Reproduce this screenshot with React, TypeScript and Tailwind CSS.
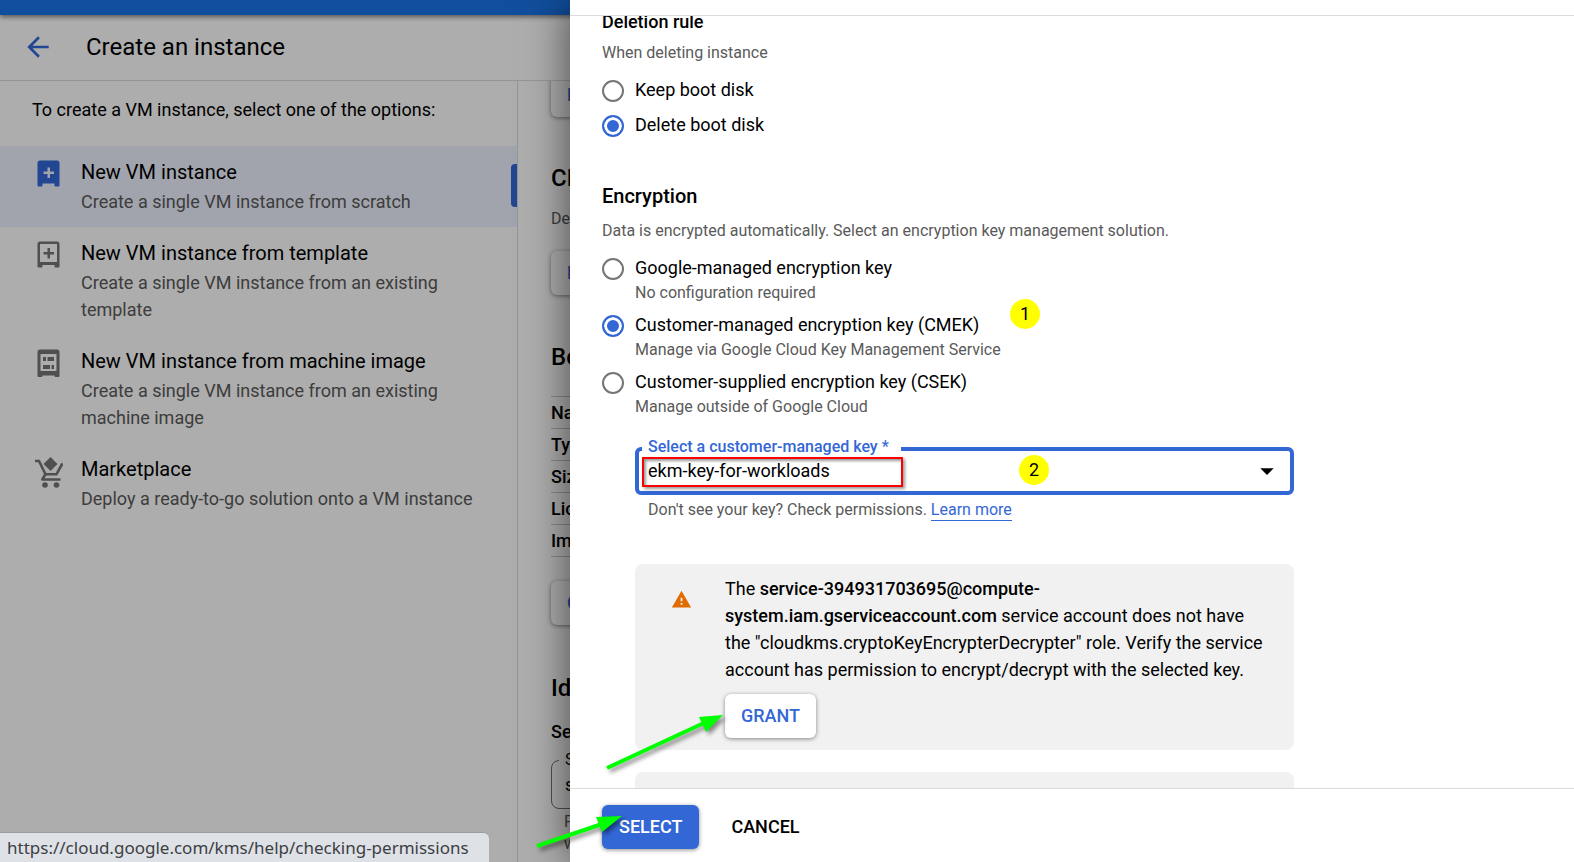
import React, { useState } from "react";
import { MdArrowBack, MdArrowDropDown, MdWarning } from "react-icons/md";

const VmIcon = () => (
  <svg width="24" height="27" viewBox="0 0 24 27" fill="#3367d6">
    <path d="M3 0.5h17a2.5 2.5 0 0 1 2.5 2.5v22.500a1 1 0 0 1-1 1h-3a1 1 0 0 1-1-1V23.500h-12V25.500a1 1 0 0 1-1 1h-3a1 1 0 0 1-1-1V3A2.500 2.500 0 0 1 3 .5z" />
    <path d="M10.500 7.500h2.500v4h4v2.500h-4v4h-2.500v-4h-4v-2.500h4z" fill="#eef2ff" />
  </svg>
);

const TemplateIcon = () => (
  <svg width="24" height="27" viewBox="0 0 24 27" fill="#757575">
    <path
      fillRule="evenodd"
      d="M3 .5h17A2.500 2.500 0 0 1 22.500 3v22.500a1 1 0 0 1-1 1h-3a1 1 0 0 1-1-1V24h-12v1.500a1 1 0 0 1-1 1h-3a1 1 0 0 1-1-1V3A2.500 2.500 0 0 1 3 .5zM3 3v18h17V3z"
    />
    <path d="M10.500 7h2.500v4h4v2.500h-4v4h-2.500v-4h-4V11h4z" />
  </svg>
);

const MachineImageIcon = () => (
  <svg width="24" height="28" viewBox="0 0 24 28" fill="#757575">
    <path
      fillRule="evenodd"
      d="M3 .5h17A2.500 2.500 0 0 1 22.500 3v24a1 1 0 0 1-1 1h-3a1 1 0 0 1-1-1v-.5h-12v.5a1 1 0 0 1-1 1h-3a1 1 0 0 1-1-1V3A2.500 2.500 0 0 1 3 .5zM3.500 5v17h16V5z"
    />
    <path d="M6 8h3v4H6zM10.500 8H17v4h-6.500zM6 16h7v4H6zM14.500 16H17v4h-2.500z" />
  </svg>
);

const MarketplaceIcon = () => (
  <svg width="28" height="31" viewBox="0 0 28 31" fill="none" stroke="#757575" strokeWidth="2.600">
    <path d="M0 4h4l6.500 13.200h11l6-10.700" />
    <path d="M10.500 17l-3.200 5.500H25.500" strokeLinejoin="round" />
    <path d="M15.500 0l7 7-7 7-7-7z" fill="#757575" stroke="none" />
    <circle cx="10" cy="28" r="2.800" fill="#757575" stroke="none" />
    <circle cx="21.500" cy="28" r="2.800" fill="#757575" stroke="none" />
  </svg>
);

const options = [
  { icon: <VmIcon />, title: "New VM instance", text: "Create a single VM instance from scratch", active: true },
  { icon: <TemplateIcon />, title: "New VM instance from template", text: "Create a single VM instance from an existing template" },
  { icon: <MachineImageIcon />, title: "New VM instance from machine image", text: "Create a single VM instance from an existing machine image" },
  { icon: <MarketplaceIcon />, title: "Marketplace", text: "Deploy a ready-to-go solution onto a VM instance" },
];

const diskRows = ["Name", "Type", "Size", "License", "Image"];

const encryptionOptions = [
  { id: "google", label: "Google-managed encryption key", hint: "No configuration required" },
  { id: "cmek", label: "Customer-managed encryption key (CMEK)", hint: "Manage via Google Cloud Key Management Service" },
  { id: "csek", label: "Customer-supplied encryption key (CSEK)", hint: "Manage outside of Google Cloud" },
];

const radioClass =
  "appearance-none shrink-0 w-[22px] h-[22px] rounded-full border-2 border-[#757575] bg-white checked:border-[#3367d6] checked:bg-[#3367d6] checked:shadow-[inset_0_0_0_3px_white]";

const raisedButton =
  "h-11 px-4 rounded-md bg-white text-[#3367d6] text-lg font-medium shadow-[0_1px_4px_rgba(0,0,0,0.45)]";

function Badge({ children, className }: { children: React.ReactNode; className: string }) {
  return (
    <span className={`absolute flex items-center justify-center w-[30px] h-[30px] rounded-full bg-[#ffff00] text-lg ${className}`}>
      {children}
    </span>
  );
}

function Sidebar() {
  return (
    <nav className="w-[518px] shrink-0 border-r border-[#dadce0]">
      <p className="px-8 pt-[15px] pb-[23px] text-lg leading-[27px]">To create a VM instance, select one of the options:</p>
      {options.map((o) => (
        <a key={o.title} href="#" className={`relative flex py-3 pr-8 ${o.active ? "bg-[#eef2ff]" : ""}`}>
          <span className="w-[81px] shrink-0 flex items-start pl-[35px] pt-0.5">
            <span className="w-7 flex justify-center">{o.icon}</span>
          </span>
          <span>
            <span className="block mb-0.5 text-xl leading-7">{o.title}</span>
            <span className="block text-lg leading-[27px] text-[#5a5a5a]">{o.text}</span>
          </span>
          {o.active && <span className="absolute right-0 top-[18px] w-1.5 h-[43px] rounded-l bg-[#3367d6]" />}
        </a>
      ))}
    </nav>
  );
}

function InstanceForm() {
  return (
    <main className="flex-1 min-w-0 pl-[33px] overflow-hidden">
      <button className={`${raisedButton} -mt-2 block`}>ENABLE</button>
      <h2 className="mt-[45px] text-2xl leading-8 font-medium">CPU</h2>
      <p className="mt-[13px] text-base leading-6 text-[#5a5a5a]">Deploy</p>
      <button className={`${raisedButton} mt-5 block`}>DEPLOY</button>
      <h2 className="mt-[46px] mb-[23px] text-2xl leading-8 font-medium">Boot</h2>
      <table className="w-full text-left text-lg">
        <tbody>
          {diskRows.map((row) => (
            <tr key={row} className="h-8 border-y border-[#c8c8c8]">
              <th className="p-0 leading-[27px] font-medium">{row}</th>
            </tr>
          ))}
        </tbody>
      </table>
      <button className={`${raisedButton} mt-6 block`}>CHANGE</button>
      <h2 className="mt-[47px] text-2xl leading-8 font-medium">Identity</h2>
      <h3 className="mt-[14px] text-lg leading-[27px] font-medium">Service</h3>
      <div className="relative mt-[15px]">
        <label htmlFor="account" className="absolute left-2 -top-3 px-1.5 bg-white text-base leading-6">
          Service
        </label>
        <select id="account" className="appearance-none w-full h-[49px] px-[13px] rounded-lg border border-[#757575] text-lg">
          <option>service</option>
        </select>
      </div>
      <p className="px-[13px] mt-[2px] text-base leading-[22px] text-[#5a5a5a]">
        Pick
        <br />
        with
      </p>
    </main>
  );
}

function Drawer() {
  const [deletion, setDeletion] = useState("delete");
  const [encryption, setEncryption] = useState("cmek");

  return (
    <aside className="relative w-[1004px] max-w-full h-full flex flex-col bg-white shadow-[0_0_40px_rgba(0,0,0,0.6)]">
      <div className="h-4 shrink-0 border-b border-[#dadce0]" />

      <div className="flex-1 min-h-0 overflow-hidden px-8">
        <h3 className="-mt-2 text-lg leading-[27px] font-medium">Deletion rule</h3>
        <p className="mt-1.5 text-base leading-6 text-[#5a5a5a]">When deleting instance</p>
        <div className="mt-[11px] flex flex-col gap-2">
          {[
            ["keep", "Keep boot disk"],
            ["delete", "Delete boot disk"],
          ].map(([id, label]) => (
            <label key={id} className="flex items-start gap-[11px] text-lg leading-[27px]">
              <input
                type="radio"
                name="deletion"
                className={`${radioClass} mt-1`}
                checked={deletion === id}
                onChange={() => setDeletion(id)}
              />
              {label}
            </label>
          ))}
        </div>

        <h3 className="mt-11 text-xl leading-7 font-medium">Encryption</h3>
        <p className="mt-[9px] text-base leading-6 text-[#5a5a5a]">
          Data is encrypted automatically. Select an encryption key management solution.
        </p>
        <div className="relative mt-[11px] flex flex-col gap-1.5">
          {encryptionOptions.map((o) => (
            <label key={o.id} className="flex items-start gap-[11px]">
              <input
                type="radio"
                name="encryption"
                className={`${radioClass} mt-1`}
                checked={encryption === o.id}
                onChange={() => setEncryption(o.id)}
              />
              <span>
                <span className="block text-lg leading-[27px]">{o.label}</span>
                <span className="block text-base leading-6 text-[#5a5a5a]">{o.hint}</span>
              </span>
            </label>
          ))}
          <Badge className="left-[408px] top-[45px]">1</Badge>
        </div>

        <div className="ml-[33px] max-w-[659px]">
          <div className="relative mt-7">
            <label
              htmlFor="key"
              className="absolute left-[7px] -top-3 pl-1.5 pr-3 bg-white text-base leading-6 font-medium text-[#3367d6]"
            >
              Select a customer-managed key *
            </label>
            <select
              id="key"
              className="appearance-none w-full h-12 px-[9px] rounded-md border-4 border-[#3367d6] bg-white text-lg outline-none"
            >
              <option>ekm-key-for-workloads</option>
            </select>
            <MdArrowDropDown className="absolute right-[11px] top-2 pointer-events-none" size={32} />
            <span className="absolute left-[7px] top-[10px] w-[261px] h-[30px] border-2 border-[#ff0000] shadow-[2px_2px_3px_rgba(0,0,0,0.4),inset_2px_2px_3px_rgba(0,0,0,0.4)] pointer-events-none" />
            <Badge className="left-[384px] top-2">2</Badge>
          </div>
          <p className="mt-[3px] pl-[13px] text-base leading-6 text-[#5a5a5a]">
            Don't see your key? Check permissions.{" "}
            <a
              href="https://cloud.google.com/kms/help/checking-permissions"
              className="pb-px border-b border-[#3367d6] text-[#3367d6]"
            >
              Learn more
            </a>
          </p>

          <div className="mt-[42px] flex rounded-lg bg-[#f1f1f1] pt-[11px] pr-7 pb-3">
            <div className="w-[90px] shrink-0 flex justify-center pl-0.5 pt-[14px]">
              <MdWarning size={21} color="#e06c00" />
            </div>
            <div>
              <p className="text-lg leading-[27px]">
                The <b className="font-medium">service-394931703695@compute-system.iam.gserviceaccount.com</b> service
                account does not have the "cloudkms.cryptoKeyEncrypterDecrypter" role. Verify the service account has
                permission to encrypt/decrypt with the selected key.
              </p>
              <button className={`${raisedButton} mt-[11px]`}>GRANT</button>
            </div>
          </div>
          <div className="mt-[22px] h-[180px] rounded-lg bg-[#f1f1f1]" />
        </div>
      </div>

      <div className="h-[74px] shrink-0 flex items-start gap-4 px-8 pt-4 border-t border-[#dadce0]">
        <button className="h-11 px-[17px] rounded-md bg-[#3367d6] text-white text-lg font-medium shadow-[0_1px_4px_rgba(0,0,0,0.45)]">
          SELECT
        </button>
        <button className="h-11 px-4 text-lg font-medium">CANCEL</button>
      </div>
    </aside>
  );
}

function Arrows() {
  return (
    <svg
      className="absolute left-[530px] bottom-0 pointer-events-none drop-shadow-[3px_3px_2px_rgba(0,0,0,0.45)]"
      width="200"
      height="162"
      viewBox="530 700 200 162"
      fill="#00ff00"
      stroke="#00ff00"
    >
      <path d="M607 768L706 722" strokeWidth="4" />
      <path d="M723 715L699 717L706 732Z" stroke="none" />
      <path d="M537 846L602 824" strokeWidth="4" />
      <path d="M622 816L596 817L602 832Z" stroke="none" />
    </svg>
  );
}

export default function App() {
  return (
    <div className="relative h-screen flex flex-col overflow-hidden bg-white text-black font-[Roboto,sans-serif]">
      <div className="relative h-[15px] shrink-0 bg-[#1a73e8] shadow-[0_2px_5px_rgba(0,0,0,0.5)]" />
      <header className="h-[66px] shrink-0 flex items-center gap-8 pl-[22px] pb-0.5 border-b border-[#dadce0]">
        <button aria-label="Back" className="text-[#3367d6]">
          <MdArrowBack size={32} />
        </button>
        <h1 className="text-2xl leading-8">Create an instance</h1>
      </header>
      <div className="flex-1 min-h-0 flex">
        <Sidebar />
        <InstanceForm />
      </div>

      <div className="absolute inset-0 flex justify-end bg-black/32">
        <Drawer />
      </div>

      <Arrows />
      <div className="absolute left-0 bottom-0 h-[30px] flex items-center pl-[7px] pr-5 rounded-tr-md bg-[#dee1e6] border-t border-[#9a9da2] text-[#3c4043] text-[17px] font-['Noto_Sans',sans-serif]">
        https://cloud.google.com/kms/help/checking-permissions
      </div>
    </div>
  );
}
